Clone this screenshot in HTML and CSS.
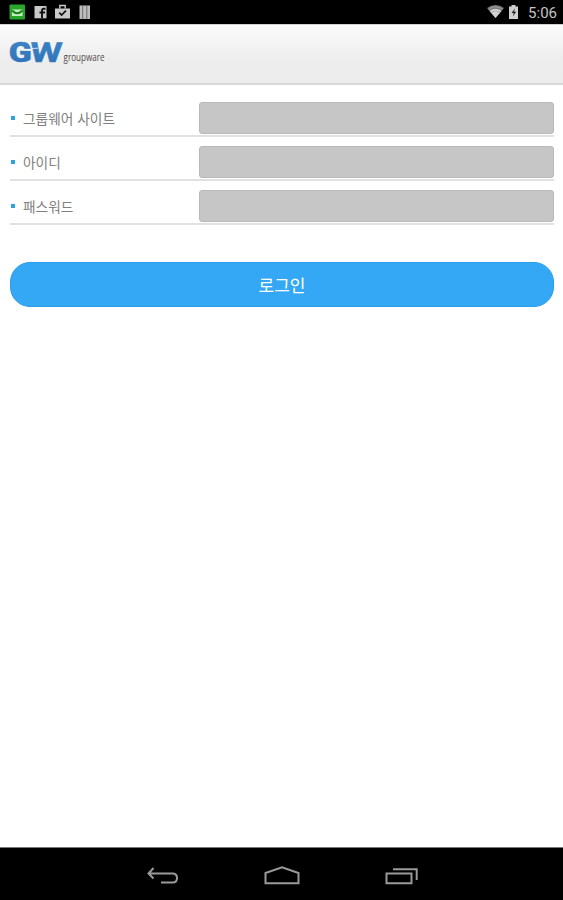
FILE: index.html
```html
<!DOCTYPE html>
<html lang="ko">
<head>
<meta charset="utf-8">
<title>groupware</title>
<link rel="stylesheet" href="styles.css">
</head>
<body>
<div class="status">
  <svg class="notices" width="94" height="24" viewBox="0 0 94 24">
    <rect x="9.500" y="4.500" width="15.500" height="15" rx="1" fill="#2aa52c"/>
    <path d="M12 9.500h10.500v6.500H12z" fill="#c5ecc0"/>
    <path d="M12 10.500q5.200 5.500 10.500 0" fill="none" stroke="#16851b" stroke-width="2"/>
    <path d="M34.500 6h12v12.300h-12z" fill="#c9c9c9"/>
    <path d="M45.500 8.800h-1.700q-1.800 0-1.800 2v7.500M39.500 12.500h5.500" fill="none" stroke="#111" stroke-width="1.900"/>
    <path d="M55 8.500h15v10h-15z" fill="#c9c9c9"/>
    <path d="M59.800 8.500V5.500h5.400v3" fill="none" stroke="#c9c9c9" stroke-width="1.400"/>
    <path d="M59.300 12.700l2.300 2.300 4.400-4.400" fill="none" stroke="#111" stroke-width="1.700"/>
    <path d="M79.500 5.500h10.500v13.500H79.500z" fill="#bdbdbd"/>
    <path d="M82.700 5.500V19M86.800 5.500V19" stroke="#626262" stroke-width=".9"/>
  </svg>
  <div class="system">
    <svg width="34" height="24" viewBox="0 0 34 24">
      <path d="M-1 8Q7.500 2 16 8L7.500 18z" fill="#777"/>
      <path d="M1.500 11Q7.500 6.500 13.500 11L7.500 18z" fill="#d2d2d2"/>
      <path d="M.5 9.300Q7.500 4.300 14.500 9.300M3 12.300q4.500-3 9 0" fill="none" stroke="#aaa" stroke-width=".8"/>
      <path d="M21 6.500h2.500V5h4v1.500H30V19h-9z" fill="#cfcfcf"/>
      <path d="M27 8.500l-3.500 4.500h2.200l-1 3.500 3.600-4.700h-2.200z" fill="#222"/>
    </svg>
    <span class="clock">5:06</span>
  </div>
</div>
<header class="header">
  <svg width="140" height="58" viewBox="0 25 140 58">
    <defs>
      <linearGradient id="blue" x1="0" y1="0" x2="0" y2="1"><stop offset="0" stop-color="#3e88c8"/><stop offset="1" stop-color="#2b6fb7"/></linearGradient>
    </defs>
    <text class="brand" x="8.800" y="62" textLength="23" lengthAdjust="spacingAndGlyphs" fill="url(#blue)">G</text>
    <text class="brand wide" x="0" y="0" transform="translate(29.500 62) skewX(-4)" textLength="32" lengthAdjust="spacingAndGlyphs" fill="url(#blue)">W</text>
    <path d="M22 50.200h9M32 48.500l6-.3" stroke="#f3f5f7" stroke-width=".8"/>
    <text class="product" x="63.500" y="61.300" textLength="41" lengthAdjust="spacingAndGlyphs">groupware</text>
  </svg>
</header>
<form class="login">
  <label class="row"><span class="label">그룹웨어 사이트</span><input class="field" type="text"></label>
  <label class="row"><span class="label">아이디</span><input class="field" type="text"></label>
  <label class="row"><span class="label">패스워드</span><input class="field" type="password"></label>
  <button class="submit" type="button">로그인</button>
</form>
<nav class="nav">
  <svg width="32" height="20" viewBox="0 0 32 20"><path d="M6.500 2L1.500 7.500l5 5M1.500 7.500h24q4.500 0 4.500 4.500t-4.500 4.500H14"/></svg>
  <svg width="36" height="20" viewBox="0 0 36 20"><path d="M1.500 17.300V7L18 1.200 34.500 7v10.300z"/></svg>
  <svg width="34" height="20" viewBox="0 0 34 20"><path d="M1.500 7.500h25v9.800h-25zM8 3.200h23.700V14"/></svg>
</nav>
</body>
</html>
```
FILE: styles.css
```css
* {
  box-sizing: border-box;
}

body {
  margin: 0;
  height: 900px;
  display: flex;
  flex-direction: column;
  background: #fff;
  overflow: hidden;
  font-family: "Noto Sans CJK KR", sans-serif;
}

svg {
  display: block;
}

.status {
  height: 24px;
  background: #000;
  display: flex;
  justify-content: space-between;
}

.system {
  display: flex;
  gap: 8px;
  padding-right: 6px;
}

.system svg {
  margin-right: -2px;
  overflow: visible;
}

.clock {
  font: 15px/26px Roboto, sans-serif;
  color: #c4c4c4;
}

.header {
  height: 61px;
  background: linear-gradient(#fbfbfb, #ededed 60%, #ececec);
  border-top: 1px solid #d0d0d0;
  border-bottom: 2px solid #d9d9d9;
}

.brand {
  font: 900 27.5px Roboto, sans-serif;
  stroke: #357bbf;
  stroke-width: .5px;
}

.wide {
  font-weight: 700;
}

.product {
  font: 10.5px "Open Sans", sans-serif;
  fill: #514b4b;
}

.login {
  flex: 1;
  padding: 8px 9px 0 10px;
}

.row {
  display: flex;
  align-items: flex-end;
  height: 44px;
  padding-bottom: 1px;
  border-bottom: 2px solid #e1e1e1;
}

.label {
  width: 189px;
  height: 32px;
  display: flex;
  align-items: center;
  font-size: 13.7px;
  line-height: 20px;
  color: #808080;
}

.label::before {
  content: "";
  width: 4px;
  height: 4px;
  margin: 0 8px 0 1px;
  background: #2ba3df;
}

.field {
  flex: 1;
  min-width: 0;
  height: 32px;
  padding: 0 8px;
  border: 1px solid #b9b9b9;
  border-radius: 3px;
  background: #c6c6c6;
}

.submit {
  display: block;
  width: 100%;
  height: 45px;
  margin-top: 37px;
  padding: 0;
  border: 1px solid #2a9ee9;
  border-radius: 20px;
  background: #35a8f5;
  color: #fff;
  font: 17px/24px "Noto Sans CJK KR", sans-serif;
}

.nav {
  height: 53px;
  background: #000;
  border-top: 1px solid #777;
  display: flex;
  justify-content: center;
  align-items: center;
  gap: 85px;
  padding: 4px 0 0 2px;
}

.nav path {
  fill: none;
  stroke: #9a9a9a;
  stroke-width: 2;
}
```
